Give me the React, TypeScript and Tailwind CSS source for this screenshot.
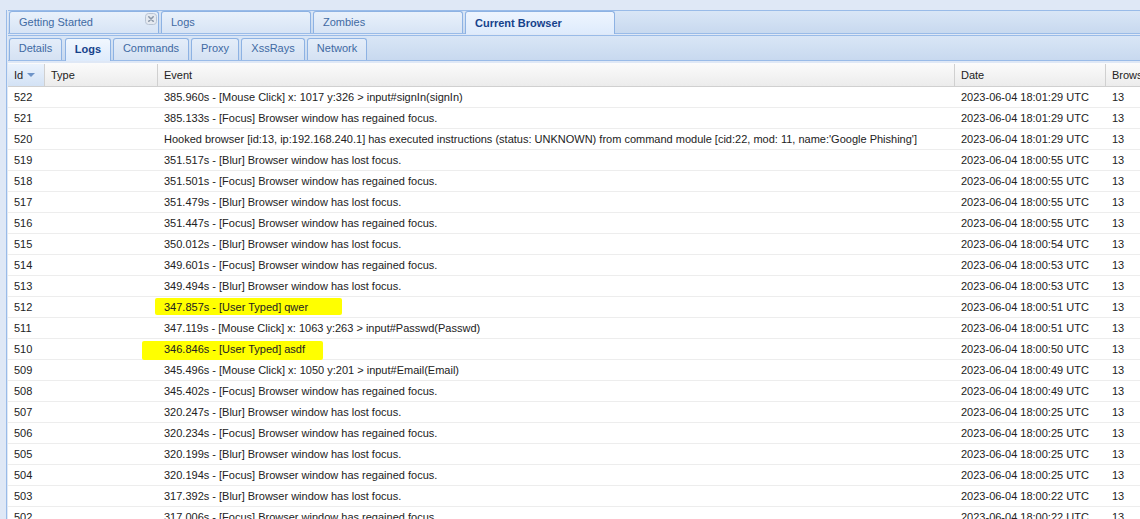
import React from "react";

type Row = { id: number; event: string; date: string; mark?: { left: number; top: number; width: number; height: number } };

const rows: Row[] = [
  { id: 522, event: "385.960s - [Mouse Click] x: 1017 y:326 > input#signIn(signIn)", date: "18:01:29" },
  { id: 521, event: "385.133s - [Focus] Browser window has regained focus.", date: "18:01:29" },
  {
    id: 520,
    event:
      "Hooked browser [id:13, ip:192.168.240.1] has executed instructions (status: UNKNOWN) from command module [cid:22, mod: 11, name:'Google Phishing']",
    date: "18:01:29",
  },
  { id: 519, event: "351.517s - [Blur] Browser window has lost focus.", date: "18:00:55" },
  { id: 518, event: "351.501s - [Focus] Browser window has regained focus.", date: "18:00:55" },
  { id: 517, event: "351.479s - [Blur] Browser window has lost focus.", date: "18:00:55" },
  { id: 516, event: "351.447s - [Focus] Browser window has regained focus.", date: "18:00:55" },
  { id: 515, event: "350.012s - [Blur] Browser window has lost focus.", date: "18:00:54" },
  { id: 514, event: "349.601s - [Focus] Browser window has regained focus.", date: "18:00:53" },
  { id: 513, event: "349.494s - [Blur] Browser window has lost focus.", date: "18:00:53" },
  { id: 512, event: "347.857s - [User Typed] qwer", date: "18:00:51", mark: { left: -3, top: 1, width: 187, height: 17 } },
  { id: 511, event: "347.119s - [Mouse Click] x: 1063 y:263 > input#Passwd(Passwd)", date: "18:00:51" },
  { id: 510, event: "346.846s - [User Typed] asdf", date: "18:00:50", mark: { left: -16, top: 2, width: 181, height: 19 } },
  { id: 509, event: "345.496s - [Mouse Click] x: 1050 y:201 > input#Email(Email)", date: "18:00:49" },
  { id: 508, event: "345.402s - [Focus] Browser window has regained focus.", date: "18:00:49" },
  { id: 507, event: "320.247s - [Blur] Browser window has lost focus.", date: "18:00:25" },
  { id: 506, event: "320.234s - [Focus] Browser window has regained focus.", date: "18:00:25" },
  { id: 505, event: "320.199s - [Blur] Browser window has lost focus.", date: "18:00:25" },
  { id: 504, event: "320.194s - [Focus] Browser window has regained focus.", date: "18:00:25" },
  { id: 503, event: "317.392s - [Blur] Browser window has lost focus.", date: "18:00:22" },
  { id: 502, event: "317.006s - [Focus] Browser window has regained focus.", date: "18:00:22" },
];

const CloseIcon = () => (
  <svg width="12" height="12" viewBox="0 0 12 12" aria-hidden="true">
    <rect x="0.5" y="0.5" width="11" height="11" rx="3" fill="#e4e9f0" stroke="#b8c4d4" />
    <path d="M3.8 3.8 L8.2 8.2 M8.2 3.8 L3.8 8.2" stroke="#8a97a8" strokeWidth="1.6" strokeLinecap="round" />
  </svg>
);

const topTabs = ["Getting Started", "Logs", "Zombies", "Current Browser"];
const subTabs = [
  { label: "Details", w: "w-[53px]" },
  { label: "Logs", w: "w-[46px] ml-[1px]" },
  { label: "Commands", w: "w-[76px]" },
  { label: "Proxy", w: "w-[48px]" },
  { label: "XssRays", w: "w-[64px]" },
  { label: "Network", w: "w-[60px]" },
];

export default function App() {
  return (
    <div className="h-[519px] w-[1140px] overflow-hidden bg-[#dfe8f6] pl-[6px] pt-[10px] font-['Liberation_Sans',Arial,sans-serif] text-[11px]">
      <div className="flex h-full flex-col border-l border-[#99bbe8] pl-[1px]">
        {/* main tab strip */}
        <div className="flex h-[24px] items-end gap-[2px] border-y border-[#99bbe8] bg-gradient-to-b from-[#d9e6f6] to-[#c8d9ef] pl-[1px]">
          {topTabs.map((t, i) => {
            const active = i === 3;
            return (
              <div
                key={t}
                className={
                  active
                    ? "relative -mb-px flex h-[23px] w-[150px] items-center rounded-t-[3px] border border-b-0 border-[#8db2e3] bg-gradient-to-b from-[#eef5fe] to-[#deebfc] pl-[9px] font-bold text-[#15428b]"
                    : "flex h-[22px] w-[150px] items-center justify-between rounded-t-[3px] border border-b-0 border-[#8db2e3] bg-gradient-to-b from-[#e9f1fb] to-[#d7e4f5] pl-[9px] pr-[1px] text-[#416aa3]"
                }
              >
                <span>{t}</span>
                {i === 0 && (
                  <span className="mt-[1px] self-start">
                    <CloseIcon />
                  </span>
                )}
              </div>
            );
          })}
        </div>
        <div className="h-px" />
        {/* sub tab strip */}
        <div className="flex h-[26px] items-end gap-[2px] border-y border-[#99bbe8] bg-gradient-to-b from-[#d9e6f6] to-[#c8d9ef] pl-[1px]">
          {subTabs.map((t, i) => {
            const active = i === 1;
            return (
              <div
                key={t.label}
                className={
                  active
                    ? `${t.w} relative -mb-px flex h-[23px] items-center justify-center rounded-t-[3px] border border-b-0 border-[#8db2e3] bg-gradient-to-b from-[#f1f7fe] to-[#deebfc] pb-[2px] font-bold text-[#15428b]`
                    : `${t.w} flex h-[22px] items-center justify-center rounded-t-[3px] border border-b-0 border-[#8db2e3] bg-gradient-to-b from-[#e4edf9] to-[#d5e2f3] pb-[2px] text-[#416aa3]`
                }
              >
                {t.label}
              </div>
            );
          })}
        </div>
        <div className="h-[2px]" />
        {/* grid */}
        <div className="flex-1 overflow-hidden bg-white text-[#222]">
          <div className="flex h-[24px] whitespace-nowrap border-b border-[#d0d0d0] bg-gradient-to-b from-[#fbfbfb] to-[#ececec] pt-[1px]">
            <div className="flex w-[37px] shrink-0 items-center gap-[4px] border-r border-[#d0d0d0] bg-gradient-to-b from-[#ebf3fd] to-[#d3e2f5] pl-[6px]">
              <span>Id</span>
              <svg width="8" height="4" viewBox="0 0 8 4" aria-hidden="true">
                <path d="M0 0 L8 0 L4 4 Z" fill="#6e94c8" />
              </svg>
            </div>
            <div className="flex w-[113px] shrink-0 items-center border-r border-[#d0d0d0] pl-[6px]">Type</div>
            <div className="flex w-[797px] shrink-0 items-center border-r border-[#d0d0d0] pl-[6px]">Event</div>
            <div className="flex w-[151px] shrink-0 items-center border-r border-[#d0d0d0] pl-[6px]">Date</div>
            <div className="flex w-[80px] shrink-0 items-center pl-[6px]">Browser</div>
          </div>
          {rows.map((r) => (
            <div key={r.id} className="flex h-[21px] whitespace-nowrap border-b border-[#ededed]">
              <div className="flex w-[37px] shrink-0 items-center pl-[6px]">{r.id}</div>
              <div className="w-[113px] shrink-0" />
              <div className="relative flex w-[797px] shrink-0 items-center pl-[6px]">
                {r.mark && (
                  <span
                    className="absolute rounded-[2px] bg-[#ffff00]"
                    style={{ left: r.mark.left, top: r.mark.top, width: r.mark.width, height: r.mark.height }}
                  />
                )}
                <span className="relative">{r.event}</span>
              </div>
              <div className="flex w-[151px] shrink-0 items-center pl-[6px]">2023-06-04 {r.date} UTC</div>
              <div className="flex w-[80px] shrink-0 items-center pl-[6px]">13</div>
            </div>
          ))}
        </div>
      </div>
    </div>
  );
}
